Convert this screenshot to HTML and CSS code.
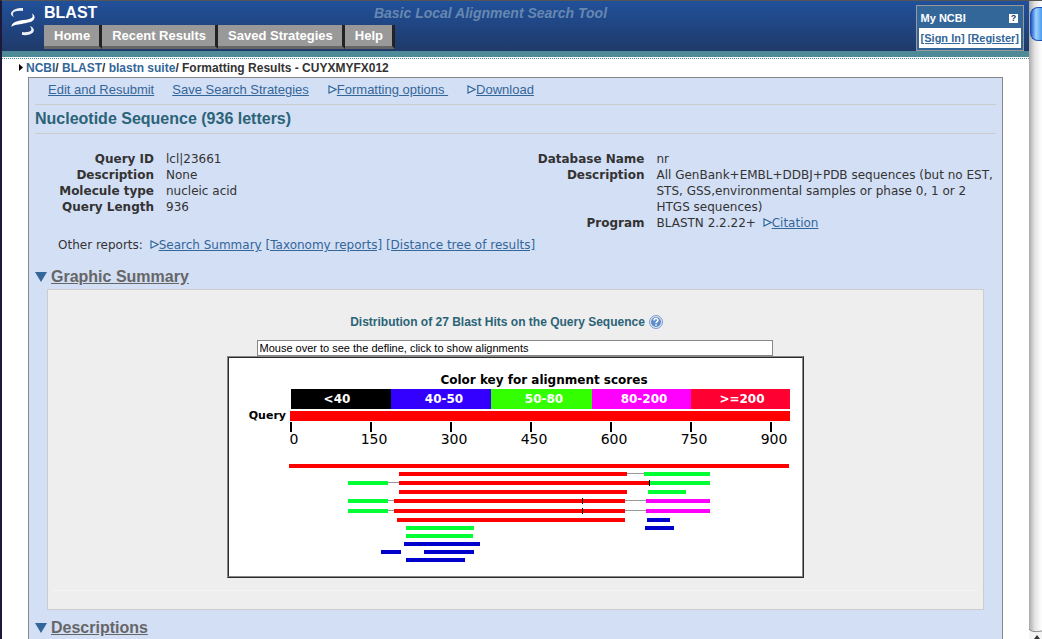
FILE: index.html
```html
<!DOCTYPE html>
<html lang="en">
<head>
<meta charset="utf-8">
<title>NCBI Blast: Nucleotide Sequence (936 letters)</title>
<link rel="stylesheet" href="styles.css">
</head>
<body>
<svg class="defs" aria-hidden="true">
  <symbol id="closed" viewBox="0 0 10 9"><path d="M2 1v7L9 4.500z" fill="#dcebfb" stroke="#336699" stroke-width="1.200"/></symbol>
  <symbol id="open" viewBox="0 0 12 10"><path d="M0 0h12L6 10z" fill="#336699"/></symbol>
</svg>
<div class="page">
  <header class="header">
    <svg class="logo" viewBox="0 0 26 30" aria-label="NCBI" role="img">
      <path fill="#eef2f8" d="M13 1v3C8 3.500 4 4.500 3 6c-.500 1.500 0 2.500 1 4C1 8.500 0 6.500 2 4.500 4 2 8 .500 13 1z"/>
      <path fill="#fff" d="M22 6.500c2.500 1.500 3.500 4 1.500 6.500-2 2.500-6 2.500-10 3.500-5 1.500-9 .500-12 3.500C1.500 16 5 14.500 10 13.500c4-.500 9-1 11.500-2.500 1.500-1 1.500-2.500.500-4.500z"/>
      <path fill="#eef2f8" d="M20 19c3.500 1.500 5 4 3 6.500-2 2-6 3-11 2.500v-3c4 .500 8 0 9-1.500 1-1 0-3-1-4.500z"/>
    </svg>
    <div class="brand">
      <h1 class="name">BLAST</h1>
      <nav class="tabs">
        <a href="#">Home</a><a href="#">Recent Results</a><a href="#">Saved Strategies</a><a href="#">Help</a>
      </nav>
    </div>
    <p class="tagline">Basic Local Alignment Search Tool</p>
    <section class="account">
      <div class="account-title">My NCBI <a class="what" href="#">?</a></div>
      <div class="account-links"><a href="#">[Sign In]</a> <a href="#">[Register]</a></div>
    </section>
  </header>
  <nav class="crumbs">
    <svg class="crumb-mark" viewBox="0 0 4 7"><path d="M0 0v7l4-3.500z"/></svg>
    <span><a href="#">NCBI</a>/ <a href="#">BLAST</a>/ <a href="#">blastn suite</a>/ Formatting Results - CUYXMYFX012</span>
  </nav>
  <main class="panel">
    <div class="actions">
      <a href="#">Edit and Resubmit</a>
      <a href="#">Save Search Strategies</a>
      <span class="toggle"><svg class="tri"><use href="#closed"/></svg><a href="#">Formatting options&nbsp;</a></span>
      <span class="toggle"><svg class="tri"><use href="#closed"/></svg><a href="#">Download</a></span>
    </div>
    <h2 class="title">Nucleotide Sequence (936 letters)</h2>
    <div class="facts">
      <table class="query">
        <tr><th scope="row">Query ID</th><td>lcl|23661</td></tr>
        <tr><th scope="row">Description</th><td>None</td></tr>
        <tr><th scope="row">Molecule type</th><td>nucleic acid</td></tr>
        <tr><th scope="row">Query Length</th><td>936</td></tr>
      </table>
      <table class="database">
        <tr><th scope="row">Database Name</th><td>nr</td></tr>
        <tr><th scope="row">Description</th><td>All GenBank+EMBL+DDBJ+PDB sequences (but no EST, STS, GSS,environmental samples or phase 0, 1 or 2 HTGS sequences)</td></tr>
        <tr><th scope="row">Program</th><td>BLASTN 2.2.22+ <svg class="tri"><use href="#closed"/></svg><a href="#">Citation</a></td></tr>
      </table>
    </div>
    <p class="reports">Other reports: <svg class="tri"><use href="#closed"/></svg><a href="#">Search Summary</a> <a href="#">[Taxonomy reports]</a> <a href="#">[Distance tree of results]</a></p>

    <h3 class="section"><svg class="down"><use href="#open"/></svg><a href="#">Graphic Summary</a></h3>
    <section class="graphic">
      <h4 class="caption">Distribution of 27 Blast Hits on the Query Sequence
        <svg class="help" viewBox="0 0 14 14"><circle cx="7" cy="7" r="6.500" fill="#dce8f6" stroke="#7c9cc8"/><circle cx="7" cy="7" r="5" fill="#5f8bc9"/><path d="M5 5.500C5 3 9 3 9 5.300 9 6.700 7 6.700 7 8.200M7 9.300v1.500" fill="none" stroke="#fff" stroke-width="1.500"/></svg>
      </h4>
      <input class="defline" type="text" aria-label="Defline" value="Mouse over to see the defline, click to show alignments" readonly>
      <div class="chart">
        <svg viewBox="0 0 573 218" role="img" aria-label="Alignment hits">
          <text class="key-title" x="315" y="26">Color key for alignment scores</text>
          <g shape-rendering="crispEdges">
            <path fill="#000" d="M62 31h100v20H62z"/>
            <path fill="#3300ff" d="M162 31h100v20H162z"/>
            <path fill="#33ff00" d="M262 31h101v20H262z"/>
            <path fill="#ff00ff" d="M363 31h99v20H363z"/>
            <path fill="#ff0033" d="M462 31h99v20H462z"/>
            <path fill="#f00" d="M61 53h500v10H61z"/>
            <path fill="#000" d="M61 64h2v10h-2zM141 64h2v10h-2zM221 64h2v10h-2zM301 64h2v10h-2zM381 64h2v10h-2zM461 64h2v10h-2zM541 64h2v10h-2z"/>
            <path fill="#999" d="M398 115h17v1h-17zM159 124h11v1h-11zM159 142h6v1h-6zM396 142h21v1h-21zM159 152h6v1h-6zM396 152h21v1h-21z"/>
            <path fill="#f00" d="M60 106h500v4H60zM170 114h228v4H170zM170 123h250v4H170zM170 132h228v4H170zM165 141h231v4H165zM165 151h231v4H165zM168 160h228v4H168z"/>
            <path fill="#00ff33" d="M415 114h66v4h-66zM119 123h40v4h-40zM421 123h60v4h-60zM419 132h38v4h-38zM119 141h40v4h-40zM119 151h40v4h-40zM177 168h68v4h-68zM177 176h67v4h-67z"/>
            <path fill="#f0f" d="M417 141h64v4h-64zM417 151h64v4h-64z"/>
            <path fill="#00c" d="M418 160h23v4h-23zM416 168h29v4h-29zM175 184h76v4h-76zM152 192h20v4h-20zM195 192h50v4h-50zM177 200h59v4h-59z"/>
            <path fill="#000" d="M420 122h1v6h-1zM353 140h1v6h-1zM353 150h1v6h-1z"/>
          </g>
          <g class="key">
            <text x="108" y="45">&lt;40</text><text x="215" y="45">40-50</text><text x="315" y="45">50-80</text><text x="415" y="45">80-200</text><text x="513" y="45">&gt;=200</text>
          </g>
          <text class="query-label" x="57" y="61">Query</text>
          <g class="scale">
            <text x="65" y="86">0</text><text x="145" y="86">150</text><text x="225" y="86">300</text><text x="305" y="86">450</text><text x="385" y="86">600</text><text x="465" y="86">750</text><text x="545" y="86">900</text>
          </g>
        </svg>
      </div>
      <hr class="rule">
    </section>
    <h3 class="section"><svg class="down"><use href="#open"/></svg><a href="#">Descriptions</a></h3>
  </main>
</div>
<div class="scrollbar" aria-hidden="true">
  <div class="thumb"></div>
  <svg class="arrow" viewBox="0 0 13 10"><path d="M0 0c2 3 7 3 13 2v8H0z" fill="#f4f4f4"/><path d="M0 0c2 3 7 3 13 2" fill="none" stroke="#888"/><path d="M8 6l3 4H5z" fill="#333"/></svg>
</div>
</body>
</html>
```
FILE: styles.css
```css
* { box-sizing: border-box; }
html { height: 100%; overflow: hidden; }
body {
  margin: 0;
  height: 100%;
  display: grid;
  grid-template-columns: 1fr 13px;
  grid-template-rows: 100%;
  overflow: hidden;
  background: #fff;
  border-top: 1px solid #555;
  border-left: 2px solid #1d1838;
  color: #333;
  font: 13px/16px "Liberation Sans", Arial, sans-serif;
}
h1, h2, h3, h4, p { margin: 0; }
a { color: #336699; }
.defs { display: none; }
.page { min-width: 0; overflow: hidden; }

.header {
  display: grid;
  grid-template-columns: 42px auto 1fr auto;
  height: 56px;
  padding-right: 5px;
  background: linear-gradient(#21509a, #1f3a69);
  border-bottom: 6px solid #4f8a99;
}
.logo { grid-area: 1 / 1; width: 26px; height: 30px; margin: 6px 0 0 8px; }
.brand { grid-area: 1 / 2; }
.name { color: #fff; font-size: 16px; line-height: 20px; padding: 2px 0; }
.tabs { display: flex; }
.tabs a {
  padding: 0 9px 0 10px;
  color: #fff;
  background: #999;
  border-right: 3px solid #222;
  border-bottom: 3px solid #666;
  font-weight: bold;
  line-height: 21px;
  text-decoration: none;
}
.tagline {
  grid-area: 1 / 1 / 2 / 5;
  justify-self: center;
  padding: 4px 45px 0 0;
  color: #6688b0;
  font-size: 14px;
  font-style: italic;
  font-weight: bold;
}
.account {
  grid-area: 1 / 4;
  align-self: start;
  margin-top: 4px;
  padding: 2px;
  border: 1px solid #999;
  background: #336699;
  font-size: 11px;
  font-weight: bold;
}
.account-title {
  display: flex;
  justify-content: space-between;
  align-items: center;
  height: 20px;
  padding: 0 3px 0 2px;
  color: #fff;
}
.what {
  width: 9px;
  height: 9px;
  background: #fff;
  color: #1f3a69;
  font-size: 9px;
  line-height: 9px;
  text-align: center;
  text-decoration: none;
}
.account-links { padding: 2px; background: #fff; white-space: nowrap; }

.crumbs {
  display: flex;
  align-items: center;
  height: 20px;
  padding: 0 0 2px 17px;
  border-top: 1px dotted #4f8a99;
  font-size: 12px;
  font-weight: bold;
  margin-top: 1px;
  margin-bottom: -1px;
}
.crumbs a { text-decoration: none; }
.crumb-mark { width: 4px; height: 7px; margin-right: 3px; }

.panel {
  margin: 0 26px;
  padding: 0 6px;
  min-height: 100vh;
  background: #d3dff5;
  border: 1px solid #888;
}
.actions {
  display: flex;
  gap: 18px;
  padding: 4px 13px 6px;
  border-bottom: 1px solid #ccc;
}
.toggle { white-space: nowrap; }
.tri { width: 10px; height: 9px; }
.title {
  color: #2b6377;
  font-size: 16px;
  line-height: 28px;
  border-bottom: 1px solid #ccc;
}
.facts {
  display: grid;
  grid-template-columns: 1fr 1fr;
  padding-top: 17px;
  font: 12px/16px "DejaVu Sans", Verdana, sans-serif;
}
.facts table { border-collapse: collapse; align-self: start; width: 100%; table-layout: fixed; }
.facts th { padding: 0; text-align: right; vertical-align: top; white-space: nowrap; }
.facts td { padding: 0 0 0 12px; }
.facts .tri, .reports .tri { margin-left: 2px; }
.query th { width: 119px; }
.database th { width: 129px; }
.reports { padding: 6px 23px 0; font: 12px/16px "DejaVu Sans", Verdana, sans-serif; }
.section {
  display: flex;
  align-items: center;
  gap: 4px;
  color: #666;
  font-size: 16px;
  line-height: 20px;
}
.reports + .section { margin-top: 14px; }
.section a { color: #666; }
.down { width: 12px; height: 10px; }
.graphic {
  display: flex;
  flex-direction: column;
  align-items: center;
  margin: 2px 12px 8px;
  padding: 22px 5px 18px;
  background: #eee;
  border: 1px solid #ccc;
}
.caption {
  display: flex;
  align-items: center;
  gap: 4px;
  color: #2b6377;
  font-size: 12px;
  line-height: 20px;
  padding-right: 18px;
}
.help { width: 14px; height: 14px; }
.defline {
  width: 516px;
  max-width: 100%;
  height: 16px;
  margin: 8px 2px 0 0;
  padding: 0 2px;
  border: 1px solid #888;
  background: #fff;
  color: #000;
  font: 11px/14px "Liberation Sans", Arial, sans-serif;
}
.chart {
  width: 577px;
  max-width: 100%;
  background: #fff;
  border: 1px solid;
  border-color: #888 #2a2a2a #2a2a2a #888;
}
.chart svg {
  display: block;
  width: 100%;
  border: 1px solid;
  border-color: #2a2a2a #888 #888 #2a2a2a;
}
.chart text { font-family: "DejaVu Sans", Verdana, sans-serif; text-anchor: middle; }
.chart .key-title { font-size: 12px; font-weight: bold; }
.key text { fill: #fff; font-size: 12px; font-weight: bold; }
.chart .query-label { font-size: 11px; font-weight: bold; text-anchor: end; }
.scale text { font-size: 14px; }
.rule { width: 100%; margin: 12px 0 0; border: 0; border-top: 1px solid #f4f4f4; }

.scrollbar {
  display: flex;
  flex-direction: column;
  justify-content: space-between;
  padding-top: 6px;
  background: linear-gradient(90deg, #aaa, #e4e4e4 45%, #fff);
}
.thumb {
  height: 34px;
  margin-left: 1px;
  border: 1px solid #1d4fb4;
  border-right: 0;
  border-radius: 8px 0 0 8px;
  background: linear-gradient(90deg, #1c58c8, #9fd2ff 45%, #4b9bf0);
}
.arrow { width: 13px; height: 10px; }
```
